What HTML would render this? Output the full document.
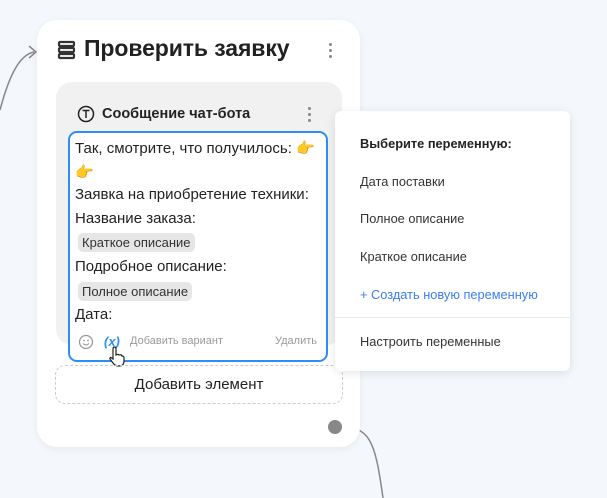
<!DOCTYPE html>
<html><head><meta charset="utf-8"><style>
*{margin:0;padding:0;box-sizing:border-box}
body{width:607px;height:498px;background:#f4f7fc;position:relative;overflow:hidden;font-family:"Liberation Sans","DejaVu Sans",sans-serif;color:#222}
.abs{position:absolute}
.card{left:37px;top:20px;width:323px;height:427px;background:#fff;border-radius:20px;box-shadow:0 2px 8px rgba(0,0,0,0.06)}
.title{left:84px;top:35px;font-size:23px;font-weight:bold;color:#222;letter-spacing:-0.1px}
.dots{width:3px}
.dots i{display:block;width:3px;height:3px;border-radius:50%;background:#888;margin-bottom:3px}
.panel{left:56px;top:82px;width:286px;height:263px;background:#f1f1f1;border-radius:16px}
.sub{left:102px;top:106px;font-size:14.5px;font-weight:bold;color:#222}
.box{left:68px;top:131px;width:260px;height:231px;background:#fff;border:2px solid #2d8ef5;border-radius:9px}
.t{position:absolute;left:75px;font-size:15px;color:#222;white-space:nowrap}
.chip{position:absolute;left:78px;background:#e6e6e6;border-radius:5px;font-size:13px;padding:2px 4px;color:#333}
.add{left:55px;top:365px;width:288px;height:39px;border:1px dashed #ccc;border-radius:10px;font-size:15px;text-align:center;line-height:37px;color:#222}
.dd{left:335px;top:111px;width:235px;height:260px;background:#fff;border-radius:6px;box-shadow:0 2px 10px rgba(0,0,0,0.1)}
.di{position:absolute;left:25px;font-size:12.8px;color:#333}
</style></head><body>
<svg class="abs" style="left:0;top:0" width="607" height="498">
<path d="M0 110 C8 80 18 55 34 52" fill="none" stroke="#888" stroke-width="1.5"/>
<path d="M29 46 L36 52 L29 58" fill="none" stroke="#888" stroke-width="1.5"/>
<path d="M336 427 C370 425 375 440 383 498" fill="none" stroke="#888" stroke-width="1.5"/>
</svg>
<div class="abs card"></div>
<svg class="abs" style="left:57px;top:40px" width="20" height="20"><g fill="none" stroke="#333" stroke-width="2.2"><rect x="2" y="2" width="15" height="4" rx="1"/><rect x="2" y="8" width="15" height="4" rx="1"/><rect x="2" y="14" width="15" height="4" rx="1"/></g></svg>
<div class="abs title">Проверить заявку</div>
<div class="abs dots" style="left:329px;top:43px"><i></i><i></i><i></i></div>
<div class="abs panel"></div>
<svg class="abs" style="left:77px;top:105px" width="18" height="18"><circle cx="9" cy="9" r="7.5" fill="none" stroke="#222" stroke-width="1.5"/><path d="M5.5 5.5H12.5M9 5.5V13" stroke="#222" stroke-width="1.5"/></svg>
<div class="abs sub">Сообщение чат-бота</div>
<div class="abs dots" style="left:308px;top:107px"><i></i><i></i><i></i></div>
<div class="abs box"></div>
<div class="t" style="top:139px">Так, смотрите, что получилось: <span style="color:#f0b020">👉</span></div>
<div class="t" style="top:163px;color:#f0b020">👉</div>
<div class="t" style="top:186px">Заявка на приобретение техники:</div>
<div class="t" style="top:210px">Название заказа:</div>
<div class="chip" style="top:233px">Краткое описание</div>
<div class="t" style="top:258px">Подробное описание:</div>
<div class="chip" style="top:282px">Полное описание</div>
<div class="t" style="top:306px">Дата:</div>
<svg class="abs" style="left:78px;top:334px" width="16" height="16"><circle cx="8" cy="8" r="6.5" fill="none" stroke="#999" stroke-width="1.3"/><circle cx="6" cy="6.5" r="0.9" fill="#999"/><circle cx="10" cy="6.5" r="0.9" fill="#999"/><path d="M5 9.5 Q8 12.5 11 9.5" fill="none" stroke="#999" stroke-width="1.2"/></svg>
<div class="abs" style="left:104px;top:334px;font-size:13px;font-style:italic;font-weight:bold;color:#2d8ef5">(x)</div>
<div class="abs" style="left:130px;top:335px;font-size:11px;color:#999">Добавить вариант</div>
<div class="abs" style="left:275px;top:335px;font-size:11px;color:#999">Удалить</div>
<svg class="abs" style="left:108px;top:346px" width="18" height="22"><path d="M5 3 Q5 1 6.5 1 Q8 1 8 3 V9 L9 8.5 Q10.5 8 11 9 L12 8.8 Q13.5 8.6 14 10 Q16 9.8 16 12 V15 Q16 20 11 20 Q7 20 5 17 L2 13 Q1.5 11.5 3 11.5 L5 13 Z" fill="#fff" stroke="#222" stroke-width="1.2"/></svg>
<div class="abs add">Добавить элемент</div>
<div class="abs" style="left:328px;top:420px;width:14px;height:14px;border-radius:50%;background:#888"></div>
<div class="abs dd">
<div class="di" style="top:25px;font-weight:bold;color:#222">Выберите переменную:</div>
<div class="di" style="top:63px">Дата поставки</div>
<div class="di" style="top:100px">Полное описание</div>
<div class="di" style="top:138px">Краткое описание</div>
<div class="di" style="top:176px;color:#3b7ef0">+ Создать новую переменную</div>
<div style="position:absolute;left:0;right:0;top:206px;height:1px;background:#e8e8e8"></div>
<div class="di" style="top:223px">Настроить переменные</div>
</div>
</body></html>
